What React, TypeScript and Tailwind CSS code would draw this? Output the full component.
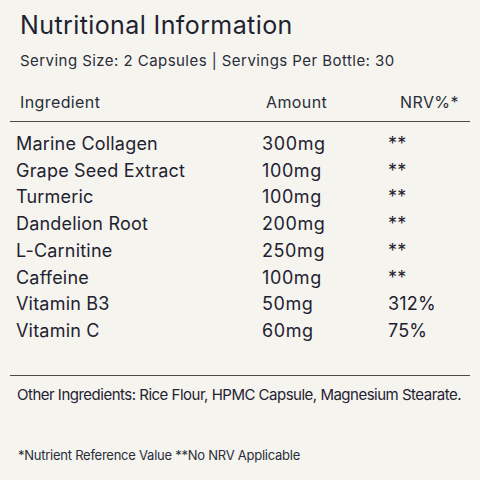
import React from "react";

const rows: [string, string, string][] = [
  ["Marine Collagen", "300mg", "**"],
  ["Grape Seed Extract", "100mg", "**"],
  ["Turmeric", "100mg", "**"],
  ["Dandelion Root", "200mg", "**"],
  ["L-Carnitine", "250mg", "**"],
  ["Caffeine", "100mg", "**"],
  ["Vitamin B3", "50mg", "312%"],
  ["Vitamin C", "60mg", "75%"],
];

export default function App() {
  return (
    <div
      className="w-[480px] h-[480px] bg-[#f5f4ef] text-[#1f2230] overflow-hidden"
      style={{ fontFamily: "Inter, 'Liberation Sans', sans-serif" }}
    >
      <div className="pt-[9px] pl-[20px] text-[25px] leading-[32px] tracking-[0.4px] whitespace-nowrap">
        Nutritional Information
      </div>
      <div className="mt-[10px] pl-[20px] text-[15px] leading-[20px] tracking-[0.45px] text-[#2a2d38] whitespace-nowrap">
        Serving Size: 2 Capsules | Servings Per Bottle: 30
      </div>
      <div className="mx-[10px] mt-[21px] border-b border-[#4a4a4a] pb-[9px] flex text-[16px] leading-[20px] tracking-[0.4px] text-[#2a2d38]">
        <div className="pl-[10px] w-[256px]">Ingredient</div>
        <div className="w-[134px]">Amount</div>
        <div>NRV%*</div>
      </div>
      <div className="mt-[9px] flex flex-col text-[18px] leading-[26.7px] tracking-[0.2px]">
        {rows.map(([n, a, v]) => (
          <div key={n} className="flex">
            <div className="pl-[16px] w-[262px]">{n}</div>
            <div className="w-[126px] tracking-[0.6px]">{a}</div>
            <div>{v}</div>
          </div>
        ))}
      </div>
      <div className="mx-[10px] mt-[30px] border-t border-[#4a4a4a]" />
      <div className="mt-[9.6px] pl-[17px] text-[15px] leading-[20px] tracking-[-0.5px] whitespace-nowrap">
        Other Ingredients: Rice Flour, HPMC Capsule, Magnesium Stearate.
      </div>
      <div className="mt-[40.7px] pl-[18px] text-[13px] leading-[18px] tracking-[-0.25px] text-[#2a2d38] whitespace-nowrap">
        *Nutrient Reference Value **No NRV Applicable
      </div>
    </div>
  );
}
